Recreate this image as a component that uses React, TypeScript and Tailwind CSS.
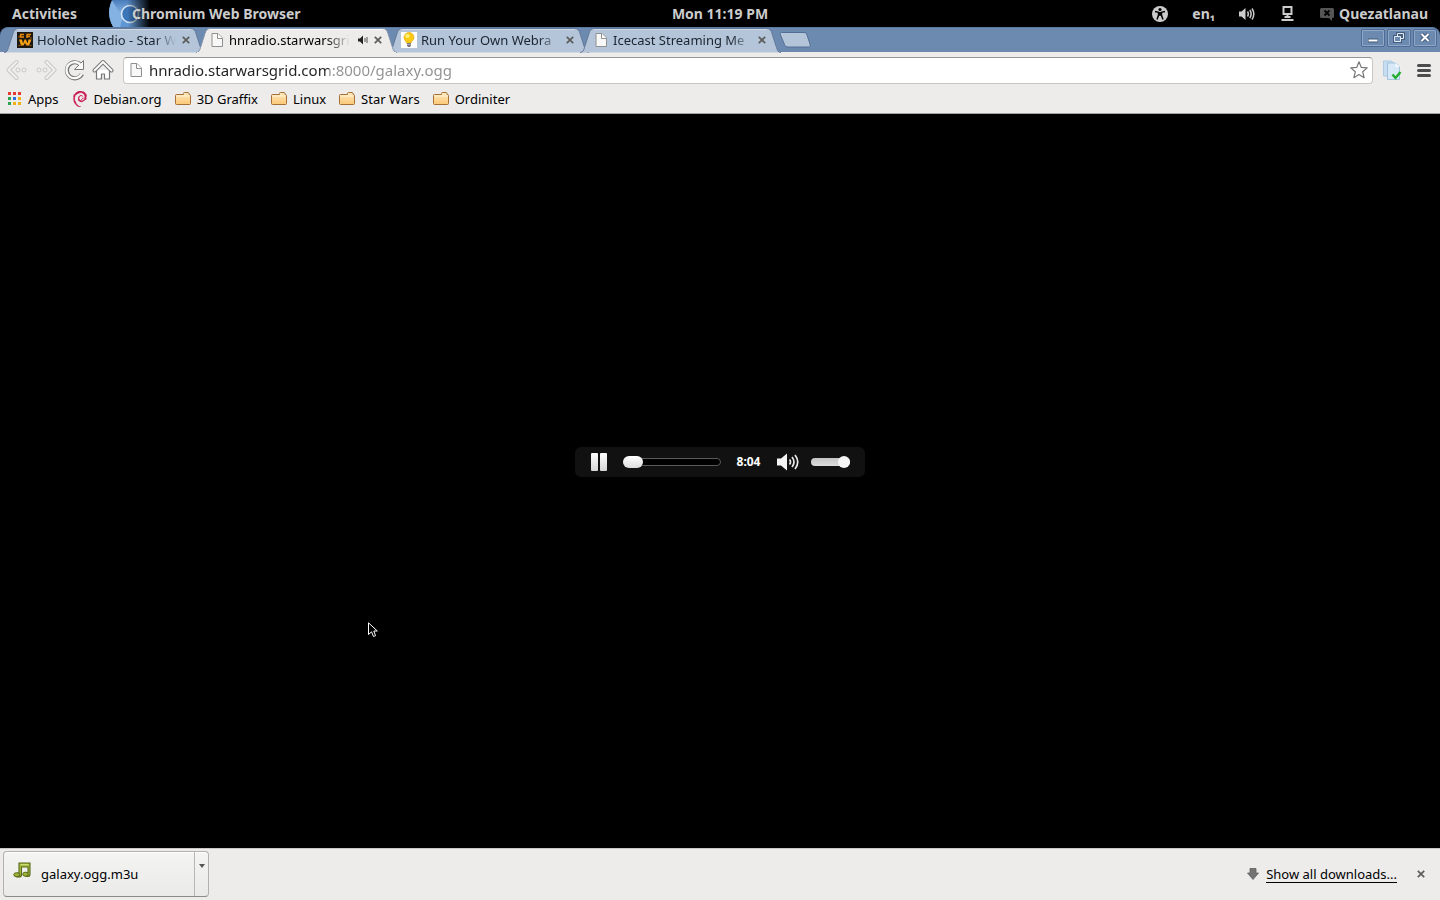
import type { ReactNode } from "react";
import { SiDebian } from "react-icons/si";

const TAB_PATH = "M0 24.5 C3 24.5 3.5 22.5 4.5 19.5 L9 5.5 C10 2.5 11 0.5 14 0.5 L187 0.5 C190 0.5 191 2.5 192 5.5 L196.5 19.5 C197.5 22.5 198 24.5 201 24.5";

function PageIcon() {
  return (
    <svg className="block" width="16" height="16" viewBox="0 0 16 16" aria-hidden="true">
      <path d="M3 1.5h6l4.5 4.5v8.5H3z" fill="#f8f8f8" stroke="#8f8f8f" />
      <path d="M8.5 1.5v5h5" fill="#fff" stroke="#8f8f8f" />
    </svg>
  );
}

function HoloIcon() {
  return (
    <svg className="block" width="16" height="16" viewBox="0 0 16 16" aria-hidden="true">
      <rect width="16" height="16" fill="#1c1710" />
      <path d="M3 2.500h4M9.500 2.500H14M3.500 2.500v2.500H7M10 2.500V6M10 4.500h3" stroke="#e98a0c" strokeWidth="1.500" fill="none" />
      <path d="M2 7.500h3l1 4 1.500-4h1.500l1.500 4 1-4h3L12 13.500H9.500L8 11l-1.500 2.500H4z" fill="#f5a015" />
      <path d="M1 5h2M13 6h2M1.500 13.500h2M12.500 13.500h2" stroke="#9b5608" />
    </svg>
  );
}

function BulbIcon() {
  return (
    <svg className="block" width="16" height="16" viewBox="0 0 16 16" aria-hidden="true">
      <rect width="16" height="16" fill="#fff" />
      <path d="M8 .5a5 5 0 0 0-5 5c0 2.500 2 3.500 2.500 5.500h4.500C10.500 9 13 8 13 5.500a5 5 0 0 0-5-5z" fill="#fbc912" stroke="#dda20a" strokeWidth=".6" />
      <ellipse cx="6.500" cy="4" rx="2.200" ry="2" fill="#fff27a" />
      <path d="M6 11h4v2.500L9 15H7l-1-1.500z" fill="#77777c" />
      <path d="M6 12.500h4" stroke="#bbb" strokeWidth=".8" />
    </svg>
  );
}

function CloseGlyph() {
  return (
    <svg className="block" width="8" height="8" viewBox="0 0 8 8" aria-hidden="true">
      <path d="M.8 .8l6.400 6.400M7.200 .8L.8 7.200" stroke="#5c5c5c" strokeWidth="1.700" />
    </svg>
  );
}

function Folder() {
  return (
    <svg className="block" width="16" height="16" viewBox="0 0 16 16" aria-hidden="true">
      <defs>
        <linearGradient id="folder" x1="0" y1="0" x2="0" y2="1">
          <stop offset="0" stopColor="#ffe9bd" />
          <stop offset="1" stopColor="#fbc878" />
        </linearGradient>
      </defs>
      <path d="M.5 4.500V12.500a1 1 0 0 0 1 1h13a1 1 0 0 0 1-1v-8a1 1 0 0 0-1-1H14v-1a1 1 0 0 0-1-1H9.500a1 1 0 0 0-1 1v1h-7a1 1 0 0 0-1 1z" fill="url(#folder)" stroke="#a57137" />
      <path d="M1.500 5h13" stroke="#fff3d8" />
    </svg>
  );
}

function AppsIcon() {
  const colors = ["#e53935", "#e53935", "#e53935", "#2aa352", "#2b6fe0", "#efb010", "#2aa352", "#efb010", "#efb010"];
  return (
    <svg className="block" width="14" height="14" viewBox="0 0 14 14" aria-hidden="true">
      {colors.map((c, i) => (
        <rect key={i} x={(i % 3) * 5} y={Math.floor(i / 3) * 5} width="3" height="3" fill={c} />
      ))}
    </svg>
  );
}

type TabProps = { title: string; icon: ReactNode; active?: boolean; audio?: boolean };

function Tab({ title, icon, active, audio }: TabProps) {
  return (
    <div className={active ? "relative z-10 -mr-[9px] h-6 w-[201px]" : "relative -mr-[9px] h-6 w-[201px]"}>
      <svg className="absolute inset-0" width="201" height="25" viewBox="0 0 201 25" aria-hidden="true">
        <path d={TAB_PATH} fill={active ? "#edeceb" : "#b5c5d9"} stroke={active ? "#8295ad" : "#66799a"} />
        <path d="M14 1.500H187" stroke={active ? "#fff" : "#cfdae7"} />
        {active && <path d="M1 24.500H200" stroke="#edeceb" />}
      </svg>
      <div className="relative flex h-[23px] items-center pr-[13px] pl-[13px]">
        {icon}
        <button role="tab" aria-selected={!!active} className={active
          ? "ml-1 min-w-0 flex-1 overflow-hidden text-left text-[13px] leading-5 whitespace-nowrap text-black [mask-image:linear-gradient(to_right,#000_80%,transparent)]"
          : "ml-1 min-w-0 flex-1 overflow-hidden text-left text-[13px] leading-5 whitespace-nowrap text-[#1b2430] [mask-image:linear-gradient(to_right,#000_85%,transparent)]"}>
          {title}
        </button>
        {audio && (
          <svg className="ml-2 block" width="10" height="10" viewBox="0 0 10 10" aria-hidden="true">
            <path d="M0 3.500h2L5 .5v9l-3-3H0z" fill="#222" />
            <path d="M7 3v4M9 2v6" stroke="#555" />
          </svg>
        )}
        <button aria-label="Close tab" className="ml-1 p-0.5"><CloseGlyph /></button>
      </div>
    </div>
  );
}

function WindowButton({ label, children }: { label: string; children: ReactNode }) {
  return (
    <button aria-label={label} className="h-[18px] w-6 rounded-xs border border-[#4d6b94] shadow-[inset_0_0_0_1px_#8fa8c8]">
      <svg className="block" width="22" height="16" viewBox="0 0 22 16" fill="none" aria-hidden="true">{children}</svg>
    </button>
  );
}

function TopBar() {
  return (
    <header className="grid h-[27px] grid-cols-[1fr_auto_1fr] items-center bg-black text-[14px] leading-5 font-bold text-[#cccccc]">
      <div className="flex h-full items-center">
        <button className="ml-3">Activities</button>
        <button className="relative ml-8 flex h-full items-center pl-[23px]">
          <svg className="absolute top-0 left-0" width="40" height="27" viewBox="0 0 40 27" aria-hidden="true">
            <defs>
              <linearGradient id="appfade" x1="0" x2="1">
                <stop offset=".45" stopColor="#000" stopOpacity="0" />
                <stop offset="1" stopColor="#000" />
              </linearGradient>
              <linearGradient id="blue" x1="0" y1="0" x2="0" y2="1">
                <stop offset="0" stopColor="#4a7cba" />
                <stop offset="1" stopColor="#8bb9e8" />
              </linearGradient>
            </defs>
            <circle cx="23" cy="13" r="23" fill="#5f96d4" />
            <path d="M3 0 L14 17 L11 27 H4 C-1 18-1 8 3 0z" fill="#84b2e3" />
            <path d="M3 0H40V7H22C16 7 13 10 12 15z" fill="url(#blue)" />
            <circle cx="21" cy="14" r="8.500" fill="#3c75b8" stroke="#d5e4f4" strokeWidth="1.600" />
            <rect width="41" height="27" fill="url(#appfade)" />
          </svg>
          <span className="relative">Chromium Web Browser</span>
        </button>
      </div>
      <button>Mon 11:19 PM</button>
      <div className="flex h-full items-center justify-end pr-3">
        <button aria-label="Accessibility">
          <svg className="block" width="16" height="16" viewBox="0 0 16 16" aria-hidden="true">
            <circle cx="8" cy="8" r="8" fill="#ccc" />
            <circle cx="8" cy="3.500" r="1.600" fill="#000" />
            <path d="M3 5.500l3.500.8v3L5 13.500M13 5.500l-3.500.8v3l1.500 4.200" stroke="#000" strokeWidth="1.500" fill="none" />
            <path d="M6 6h4v4.500L8 9.500l-2 1z" fill="#000" />
          </svg>
        </button>
        <button className="ml-6">en₁</button>
        <button aria-label="Volume" className="ml-6">
          <svg className="block" width="16" height="14" viewBox="0 0 16 14" fill="none" aria-hidden="true">
            <path d="M0 4.500h2.500L6.500 1v12l-4-3.500H0z" fill="#ccc" />
            <path d="M8.500 4.500q1.600 2.500 0 5M10.800 3q2.600 4 0 8M13 1.500q3.600 5.500 0 11" stroke="#ccc" strokeWidth="1.500" />
          </svg>
        </button>
        <button aria-label="Network" className="ml-[26px]">
          <svg className="block" width="13" height="15" viewBox="0 0 13 15" aria-hidden="true">
            <path d="M2.500 1h8v7h-8z" fill="#000" stroke="#ccc" strokeWidth="2" />
            <path d="M5.500 9h2v3h-2zM3.500 10h6v2h-6zM.5 13h12v2H.5z" fill="#ccc" />
          </svg>
        </button>
        <button className="ml-[26px] flex items-center gap-[5px]">
          <svg className="block" width="14" height="14" viewBox="0 0 14 14" aria-hidden="true">
            <path d="M1.500 1h11a1.500 1.500 0 0 1 1.500 1.500v7a1.500 1.500 0 0 1-1.500 1.500H12v3l-3-3H1.500A1.500 1.500 0 0 1 0 9.500v-7A1.500 1.500 0 0 1 1.500 1z" fill="#555" />
            <path d="M4.500 3.500l5 5M9.500 3.500l-5 5" stroke="#000" strokeWidth="1.800" />
          </svg>
          Quezatlanau
        </button>
      </div>
    </header>
  );
}

function TabStrip() {
  return (
    <div className="bg-black">
      <div className="flex h-[25px] rounded-t-lg border-t border-[#5a7aa3] bg-[#6c89b0] pl-1">
        <div role="tablist" className="flex">
          <Tab title="HoloNet Radio - Star W" icon={<HoloIcon />} />
          <Tab title="hnradio.starwarsgri" icon={<PageIcon />} active audio />
          <Tab title="Run Your Own Webra" icon={<BulbIcon />} />
          <Tab title="Icecast Streaming Me" icon={<PageIcon />} />
        </div>
        <button aria-label="New tab" className="mt-1 ml-[7px] self-start">
          <svg className="block" width="32" height="16" viewBox="0 0 32 16" aria-hidden="true">
            <path d="M2.500.5H25c2 0 2.500 1 3 2.500L31 12c.5 2 0 3-1.500 3H9c-2 0-3-1-3.500-2.500L1.500 3C.8 1.500 1 .5 2.500.5z" fill="#b5c5d9" stroke="#536e94" />
          </svg>
        </button>
        <div className="mt-px mr-[3px] ml-auto flex gap-0.5">
          <WindowButton label="Minimize">
            <path d="M6 10.500h10" stroke="#3f5878" strokeWidth="4" />
            <path d="M6.500 10.500h9" stroke="#fff" strokeWidth="2" />
          </WindowButton>
          <WindowButton label="Restore">
            <path d="M9.500 3.500h6v5h-6zM6.500 6.500h6v5h-6z" stroke="#465f80" strokeWidth="3" />
            <path d="M9.500 3.500h6v5h-6z" stroke="#e3ebf5" />
            <path d="M6.500 6.500h6v5h-6z" fill="#6c89b0" stroke="#e3ebf5" />
          </WindowButton>
          <WindowButton label="Close">
            <path d="M7.500 4l7 7M14.500 4l-7 7" stroke="#465f80" strokeWidth="4" />
            <path d="M7.500 4l7 7M14.500 4l-7 7" stroke="#fff" strokeWidth="1.800" />
          </WindowButton>
        </div>
      </div>
    </div>
  );
}

function Arrow({ flip }: { flip?: boolean }) {
  return (
    <svg className={flip ? "block -scale-x-100" : "block"} width="22" height="22" viewBox="0 0 22 22" fill="none" aria-hidden="true">
      <path d="M10.500 3L2.500 11l8 8" stroke="#c8c8c6" strokeWidth="4" strokeLinejoin="round" strokeLinecap="round" />
      <path d="M10.500 3L2.500 11l8 8" stroke="#f1f0ef" strokeWidth="2" strokeLinejoin="round" strokeLinecap="round" />
      <circle cx="12" cy="11" r="2" fill="#f1f0ef" stroke="#c8c8c6" />
      <circle cx="18" cy="11" r="2" fill="#f1f0ef" stroke="#c8c8c6" />
    </svg>
  );
}

function Toolbar() {
  return (
    <div className="flex h-9 items-center bg-[#edeceb] pr-[9px] pl-[6px]">
      <button aria-label="Back"><Arrow /></button>
      <button aria-label="Forward" className="ml-[7px]"><Arrow flip /></button>
      <button aria-label="Reload" className="ml-[7px]">
        <svg className="block" width="22" height="22" viewBox="0 0 22 22" fill="none" aria-hidden="true">
          <path d="M16.500 5.500a8 8 0 1 0 1.500 9.500" stroke="#777" strokeWidth="4.200" />
          <path d="M19.500 1.500v9h-9z" fill="#fafafa" stroke="#777" strokeLinejoin="round" />
          <path d="M17 6.500a8 8 0 1 0 .8 8" stroke="#fafafa" strokeWidth="2.200" />
        </svg>
      </button>
      <button aria-label="Home" className="ml-[6px]">
        <svg className="block" width="22" height="22" viewBox="0 0 22 22" fill="none" aria-hidden="true">
          <path d="M4.500 11v9h5v-5h3v5h5v-9" fill="#fff" stroke="#777" strokeWidth="1.200" strokeLinejoin="round" />
          <path d="M2.500 11.500L11 3l8.500 8.500" stroke="#777" strokeWidth="4" strokeLinejoin="round" strokeLinecap="round" />
          <path d="M2.500 11.500L11 3l8.500 8.500" stroke="#fafafa" strokeWidth="2" strokeLinejoin="round" strokeLinecap="round" />
        </svg>
      </button>
      <div className="ml-[9px] flex h-[27px] flex-1 items-center rounded-sm border border-[#c9c7c5] border-t-[#979593] bg-white pr-[4px] pl-1">
        <PageIcon />
        <input
          aria-label="Address"
          type="text"
          defaultValue="hnradio.starwarsgrid.com:8000/galaxy.ogg"
          className="ml-[5px] min-w-0 flex-1 bg-[linear-gradient(to_right,#222_180px,#919191_180px)] bg-clip-text text-[15px] leading-6 text-transparent outline-none"
        />
        <button aria-label="Bookmark this page">
          <svg className="block" width="18" height="18" viewBox="0 0 18 18" aria-hidden="true">
            <path d="M9 .8l2.300 5.600 5.900.5-4.500 3.900 1.400 5.900L9 13.600l-5.100 3.100 1.400-5.900L.8 6.900l5.900-.5z" fill="#fff" stroke="#777" strokeWidth="1.200" strokeLinejoin="round" />
          </svg>
        </button>
      </div>
      <button aria-label="Extension" className="ml-[9px]">
        <svg className="block" width="20" height="20" viewBox="0 0 20 20" aria-hidden="true">
          <path d="M1.500 1h8l3 3v12h-11z" fill="#c7def2" stroke="#a3c4e0" strokeWidth=".8" />
          <path d="M5.500 3h8l4 4v12.500h-12z" fill="#d7e8f6" stroke="#96bbdb" strokeWidth=".8" />
          <path d="M13.500 3l4 4h-4z" fill="#f5faff" />
          <path d="M10.500 14.500l3 3.500 5-6" fill="none" stroke="#21ae2b" strokeWidth="2.400" />
        </svg>
      </button>
      <button aria-label="Menu" className="ml-[15px]">
        <svg className="block" width="14" height="13" viewBox="0 0 14 13" aria-hidden="true">
          <path d="M1.500 1.500h11M1.500 6.500h11M1.500 11.500h11" stroke="#4c4c4c" strokeWidth="3" strokeLinecap="round" />
        </svg>
      </button>
    </div>
  );
}

function Bookmark({ icon, label }: { icon: ReactNode; label: string }) {
  return <a href="#" className="flex items-center gap-[6px]">{icon}{label}</a>;
}

function Bookmarks() {
  return (
    <nav aria-label="Bookmarks" className="flex h-[26px] items-center gap-[13px] border-b border-[#a5a3a1] bg-[#edeceb] pb-[3px] pl-2 text-[13px] leading-5 text-black">
      <Bookmark icon={<AppsIcon />} label="Apps" />
      <Bookmark icon={<SiDebian size={16} color="#c8124f" stroke="#c8124f" strokeWidth={0.9} />} label="Debian.org" />
      <Bookmark icon={<Folder />} label="3D Graffix" />
      <Bookmark icon={<Folder />} label="Linux" />
      <Bookmark icon={<Folder />} label="Star Wars" />
      <Bookmark icon={<Folder />} label="Ordiniter" />
    </nav>
  );
}

function Player() {
  return (
    <div className="flex h-[30px] w-[290px] items-center rounded-md bg-[#111111] pr-[15px] pl-4">
      <button aria-label="Pause">
        <svg className="block" width="16" height="18" viewBox="0 0 16 18" aria-hidden="true">
          <defs>
            <linearGradient id="pause" x1="0" y1="0" x2="0" y2="1">
              <stop offset="0" stopColor="#fff" />
              <stop offset="1" stopColor="#d5d5d5" />
            </linearGradient>
          </defs>
          <rect width="7" height="18" rx="1" fill="url(#pause)" />
          <rect x="9" width="7" height="18" rx="1" fill="url(#pause)" />
        </svg>
      </button>
      <input
        aria-label="Seek"
        type="range"
        min="0"
        max="100"
        defaultValue="0"
        className="ml-4 h-2 w-[98px] appearance-none rounded-full border border-[#5a5a5a] bg-black [&::-webkit-slider-thumb]:-ml-px [&::-webkit-slider-thumb]:h-3 [&::-webkit-slider-thumb]:w-5 [&::-webkit-slider-thumb]:appearance-none [&::-webkit-slider-thumb]:rounded-full [&::-webkit-slider-thumb]:bg-linear-to-b [&::-webkit-slider-thumb]:from-white [&::-webkit-slider-thumb]:to-[#dddddd]"
      />
      <span className="w-[55px] text-center text-[12px] leading-4 font-bold text-white">8:04</span>
      <button aria-label="Mute">
        <svg className="block" width="24" height="18" viewBox="0 0 24 18" fill="none" aria-hidden="true">
          <path d="M1 5.500h4L11 .5v17l-6-5H1z" fill="#f4f4f4" />
          <path d="M13.500 6.500q2 2.500 0 5M16 4q4 5 0 10M19 2q5.500 7 0 14" stroke="#e8e8e8" strokeWidth="1.700" />
        </svg>
      </button>
      <input
        aria-label="Volume"
        type="range"
        min="0"
        max="100"
        defaultValue="100"
        className="ml-auto h-2 w-[39px] appearance-none rounded-full bg-linear-to-b from-[#c4c4c4] to-[#dddddd] [&::-webkit-slider-thumb]:size-3 [&::-webkit-slider-thumb]:appearance-none [&::-webkit-slider-thumb]:rounded-full [&::-webkit-slider-thumb]:bg-[#f5f5f5]"
      />
    </div>
  );
}

function DownloadBar() {
  return (
    <footer className="flex h-[52px] items-center border-t border-[#c9c7c5] bg-[#edeceb] pr-[15px] pb-px pl-[3px] text-[13px] leading-5 text-black">
      <div className="flex h-[46px] w-[206px] rounded-sm border border-[#b3b1af] border-b-[#8c8a88] bg-linear-to-b from-[#f4f4f3] to-[#eaeae9] shadow-[inset_0_1px_0_#fff]">
        <button className="flex flex-1 items-center gap-[10px] pl-[9px]">
          <svg className="mb-2 block" width="18" height="16" viewBox="0 0 18 16" aria-hidden="true">
            <path d="M6 1h11v11.500a2.500 2 0 0 1-5 0q0-2 3-2V5H8.500v8a3 2 0 0 1-6 0q0-2 3.500-2z" fill="#a3b93b" stroke="#58691a" strokeWidth="1.100" />
            <ellipse cx="3.800" cy="12.700" rx="3" ry="2" fill="#9cb436" stroke="#58691a" />
            <ellipse cx="12.500" cy="12.200" rx="2.800" ry="2" fill="#9cb436" stroke="#58691a" />
            <path d="M7.500 2.700h8" stroke="#d7e384" />
          </svg>
          galaxy.ogg.m3u
        </button>
        <button aria-label="Download options" className="flex w-[14px] justify-center border-l border-[#b9b7b5] pt-3">
          <svg className="block" width="6" height="4" viewBox="0 0 6 4" aria-hidden="true"><path d="M0 0h6L3 4z" fill="#555" /></svg>
        </button>
      </div>
      <a href="#" className="ml-auto flex items-center gap-[7px]">
        <svg className="block" width="12" height="12" viewBox="0 0 12 12" aria-hidden="true">
          <path d="M3 .5h6V5h2.500L6 11.500.5 5H3z" fill="#747474" stroke="#5f5f5f" strokeWidth=".8" />
        </svg>
        <span className="border-b border-black leading-4">Show all downloads...</span>
      </a>
      <button aria-label="Close downloads bar" className="ml-5"><CloseGlyph /></button>
    </footer>
  );
}

export default function App() {
  return (
    <div className="flex min-h-screen flex-col bg-black font-['Noto_Sans','Open_Sans',sans-serif]">
      <TopBar />
      <TabStrip />
      <Toolbar />
      <Bookmarks />
      <main className="relative flex flex-1 flex-col items-center justify-center pb-[38px]">
        <Player />
        <svg className="absolute top-[508px] left-[368px]" width="10" height="16" viewBox="0 0 10 16" aria-hidden="true">
          <path d="M.5.800V12.500L3.500 9.800 5.500 14.500 7.500 13.700 5.800 9H9.300z" fill="#000" stroke="#fff" />
        </svg>
      </main>
      <DownloadBar />
    </div>
  );
}
